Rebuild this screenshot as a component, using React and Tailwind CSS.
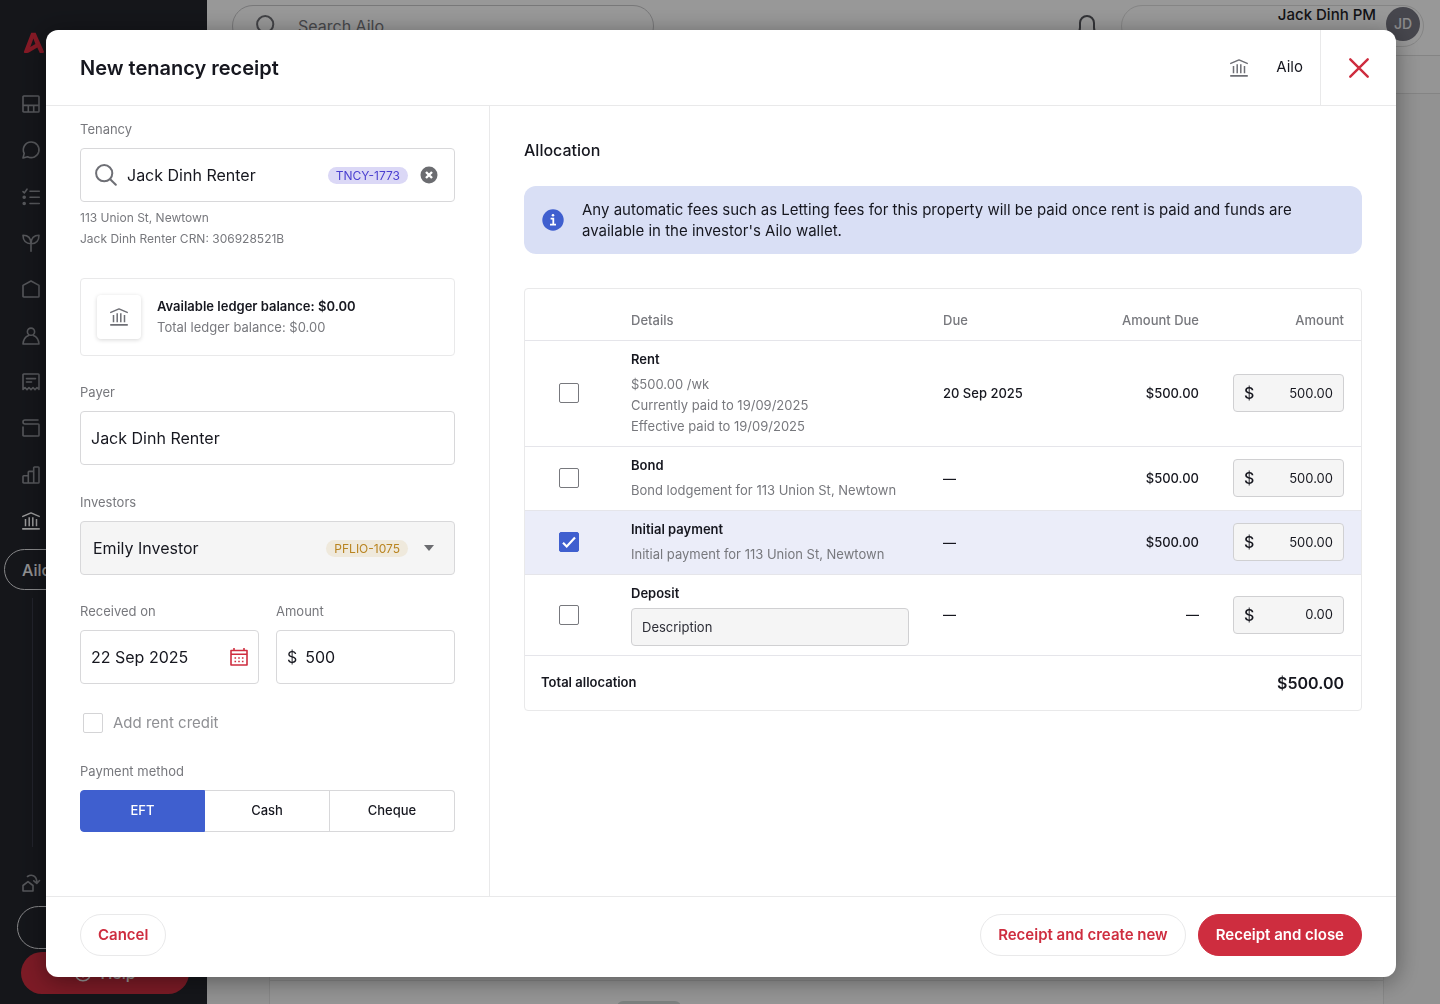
import React, { useState } from 'react';

const stroke = {
  fill: 'none',
  stroke: 'currentColor',
  strokeWidth: 1.6,
  strokeLinecap: 'round',
  strokeLinejoin: 'round',
};

const BankIcon = ({ className }) => (
  <svg viewBox="0 0 18 18" className={className} {...stroke} aria-hidden="true">
    <path d="M.8 4.400 9 .9l8.200 3.500" strokeWidth="1.500" />
    <path d="M3.500 7v7.200M7.200 5.200v9M10.800 5.200v9M14.500 7v7.200" strokeLinecap="butt" strokeWidth="1.500" />
    <path d="M.8 16.900h16.400" strokeWidth="1.700" />
  </svg>
);

const SearchIcon = ({ className }) => (
  <svg viewBox="0 0 22 22" className={className} {...stroke} strokeWidth="2" aria-hidden="true">
    <circle cx="9.2" cy="9.2" r="8.1" />
    <path d="m15.2 15.2 5.6 5.6" />
  </svg>
);

const navIcons = [
  {
    label: 'Dashboard',
    art: <path d="M1.8 1h14.4c.5 0 .8.3.8.8v14.4c0 .5-.3.8-.8.8H1.8c-.5 0-.8-.3-.8-.8V1.8c0-.5.3-.8.8-.8ZM1 10.4h16M6.3 10.4V17M11.7 10.4V17" />,
  },
  {
    label: 'Messages',
    art: <path d="M9.2 1a7.8 7.8 0 1 1-3.6 14.7L1 17l1.2-4.6A7.8 7.8 0 0 1 9.2 1Z" />,
  },
  {
    label: 'Tasks',
    art: (
      <>
        <path d="M8 3.3h9.3M8 9.3h9.3M8 15.5h9.3M1 3.6l1.4 1.3L5 1.2" />
        <circle cx="2.2" cy="9.3" r="1" fill="currentColor" />
        <circle cx="2.2" cy="15.5" r="1" fill="currentColor" />
      </>
    ),
  },
  {
    label: 'Leads',
    art: <path d="M9 17.3V9.7C4 9.7 1 6.7 1 1.3c5 0 8 2.7 8 8.4 0-5.7 3-8.4 8-8.4 0 5.4-3 8.4-8 8.4" />,
  },
  {
    label: 'Properties',
    art: <path d="M1 5.4 9 1l8 4.4v10.8c0 .5-.3.8-.8.8H1.8c-.5 0-.8-.3-.8-.8V5.4Z" />,
  },
  {
    label: 'Contacts',
    art: (
      <>
        <circle cx="9" cy="4.7" r="3.6" />
        <path d="M6.6 8.6C3.4 9.8 1.4 12.6 1 17h16c-.4-4.4-2.4-7.2-5.6-8.4" />
      </>
    ),
  },
  {
    label: 'Bills',
    art: <path d="M1 16.5V1.8c0-.5.3-.8.8-.8h14.4c.5 0 .8.3.8.8v14.7l-2-2-2 2.2-2-2.2-2 2.2-2-2.2-2 2.2-2-2.2-2 2ZM4.5 5.6h9M4.5 9h5" />,
  },
  {
    label: 'Wallet',
    art: <path d="M16 1H3a2 2 0 1 0 0 4h13.2c.5 0 .8.3.8.8v10.4c0 .5-.3.8-.8.8H1.8c-.5 0-.8-.3-.8-.8V8" />,
  },
  {
    label: 'Reports',
    art: <path d="M1 10.5c0-.5.3-.8.8-.8h4.5V17H1.8c-.5 0-.8-.3-.8-.8v-5.7ZM6.3 17V6.2c0-.5.3-.8.8-.8h4.6V17H6.3ZM11.7 17V1.8c0-.5.3-.8.8-.8h3.7c.5 0 .8.3.8.8v14.4c0 .5-.3.8-.8.8h-4.5Z" />,
  },
];

const Sidebar = () => (
  <nav className="flex w-[207px] shrink-0 flex-col bg-[#23252c] pt-8 pb-2.5 text-[#8e9096]">
    <svg viewBox="0 0 22 22" className="ml-[23px] h-[22px] w-[22px] text-[#df2b3f]" aria-hidden="true">
      <path
        d="M8.2.8h4.4l8.2 18.5c.5 1-.1 1.6-.9 1.6h-3.1l-2.5-5.4-8.4 4.9c-.6.3-1.1.5-1.700.5H1.800c-.8 0-1.100-.6-.8-1.400ZM10.400 6.400 7.300 15l5.100-2.900Z"
        fill="currentColor"
        fillRule="evenodd"
      />
    </svg>
    <div className="mt-[41px] ml-[22px] flex h-[435px] flex-col items-start justify-between">
      {navIcons.map(({ label, art }) => (
        <a key={label} href="#" aria-label={label}>
          <svg viewBox="0 0 18 18" className="h-[18px] w-[18px] overflow-visible" {...stroke}>
            {art}
          </svg>
        </a>
      ))}
      <a href="#" aria-label="Trust ledger" className="text-white">
        <BankIcon className="h-[18px] w-[18px]" />
      </a>
    </div>
    <a
      href="#"
      className="mt-[19px] mr-2 ml-1 flex h-[41px] items-center rounded-full border border-[#e0e0e3] pl-[17px] text-base font-medium text-[#f0f0f2]"
    >
      Ailo
    </a>
    <div className="mt-2 ml-8 w-px flex-1 bg-[#383a48]" />
    <a href="#" aria-label="Switch property" className="mt-[27px] ml-[22px]">
      <svg viewBox="0 0 18 18" className="h-[18px] w-[18px] overflow-visible" {...stroke}>
        <path d="M1 11.5 6 7.6l5 3.9V17H1v-5.5ZM5.5 2.500C9 .2 14.500.8 14.800 8M11.800 6.800l3 2.600 2.700-2.900" />
      </svg>
    </a>
    <div className="mt-3.5 mr-[17px] ml-[17px] h-[43px] rounded-full border border-[#e0e0e3]" />
    <button
      type="button"
      className="mt-[3px] mr-[18px] ml-[21px] flex h-[42px] items-center justify-center gap-2 rounded-full bg-[#ce2d3f] text-base font-medium text-white"
    >
      <svg viewBox="0 0 18 18" className="h-[18px] w-[18px]" {...stroke} aria-hidden="true">
        <circle cx="9" cy="9" r="7.8" />
        <path d="M7 7.2c0-2.5 4-2.5 4 0 0 1.5-2 1.6-2 3M9 12.8v.1" />
      </svg>
      Help
    </button>
  </nav>
);

const Backdrop = () => (
  <div className="flex h-screen w-full overflow-hidden" inert>
    <Sidebar />
    <div className="flex min-w-0 flex-1 flex-col bg-[#f3f3f3]">
      <header className="flex h-14 shrink-0 items-start justify-between border-b border-[#dcdcdc] bg-[#fdfdfd] pt-[5px] pr-4 pl-[25px]">
        <div className="flex h-[42px] w-[422px] items-center gap-5 rounded-full border border-[#c8c8ca] px-[23px] text-[#6e6f75]">
          <SearchIcon className="h-[22px] w-[22px]" />
          <input aria-label="Search" placeholder="Search Ailo..." className="min-w-0 flex-1 text-base placeholder:text-[#77787d]" />
        </div>
        <div className="flex items-start gap-[23px]">
          <svg viewBox="0 0 22 24" className="mt-2.5 h-6 w-[22px] text-[#55565c]" {...stroke} strokeWidth="2" aria-hidden="true">
            <path d="M1.5 18.5c2-1.5 2.5-3 2.5-6V8a7 7 0 0 1 14 0v4.5c0 3 .5 4.5 2.5 6h-19Z" />
          </svg>
          <div className="flex h-[42px] w-[303px] items-start justify-end gap-2.5 rounded-full border border-[#dedede] pt-px pr-[3px]">
            <div className="text-right">
              <p className="-mt-0.5 text-[15px]/5 font-medium text-[#1d1e27]">Jack Dinh PM</p>
              <p className="mt-1 flex justify-end gap-10 text-[15px]/4 text-[#6e6f75]">
                <span>Ailo Ltd</span>
                <span className="text-[#e0582f]">Runs on Ailo wallet</span>
              </p>
            </div>
            <div className="flex h-[34px] w-[34px] items-center justify-center rounded-full bg-[#757580] text-sm font-medium text-[#e8e8ea]">
              JD
            </div>
          </div>
        </div>
      </header>
      <div className="h-[38px] shrink-0 border-b border-[#dcdcdc] bg-[#f9f9f9]" />
      <div className="flex flex-1 pr-14 pl-[62px]">
        <div className="flex flex-1 flex-col justify-end border-x border-[#e2e2e2] bg-[#f9f9f9]">
          <div className="h-6 overflow-hidden border-t border-[#e2e2e2] pt-5">
            <div className="mx-auto flex w-[420px]">
              <span className="h-6 w-16 rounded-md bg-[#cfd6d4]" />
            </div>
          </div>
        </div>
      </div>
    </div>
  </div>
);

const Field = ({ id, label, className = '', children }) => (
  <div className={className}>
    <label htmlFor={id} className="block text-[13px]/5 text-[#77787d]">
      {label}
    </label>
    <div className="mt-[9px]">{children}</div>
  </div>
);

const Checkbox = ({ muted, ...props }) => (
  <span className="relative flex h-5 w-5 shrink-0">
    <input
      type="checkbox"
      className={`peer h-5 w-5 appearance-none rounded-xs border bg-white checked:border-[#3f5fcf] checked:bg-[#3f5fcf] ${
        muted ? 'border-[#d4d4d6]' : 'border-[#77787d]'
      }`}
      {...props}
    />
    <svg
      viewBox="0 0 20 20"
      className="pointer-events-none absolute inset-0 hidden h-5 w-5 text-white peer-checked:block"
      {...stroke}
      strokeWidth="2.2"
      strokeLinecap="butt"
      strokeLinejoin="miter"
    >
      <path d="m4 10.8 3.7 3.7L16 5.5" />
    </svg>
  </span>
);

const methods = ['EFT', 'Cash', 'Cheque'];

const ReceiptForm = () => {
  const [method, setMethod] = useState('EFT');

  return (
    <div className="w-[444px] shrink-0 overflow-y-auto border-r border-[#e9e9ea] pt-[13px] pr-[34px] pl-[34px]">
      <Field id="tenancy" label="Tenancy">
        <div className="flex h-[54px] items-center rounded-sm border border-[#d8d8da] pr-4 pl-3.5">
          <SearchIcon className="h-[22px] w-[22px] shrink-0 text-[#6e6f75]" />
          <input id="tenancy" defaultValue="Jack Dinh Renter" className="ml-2.5 min-w-0 flex-1 text-base outline-none" />
          <span className="rounded-full bg-[#dbd8f6] px-2 text-xs/[17px] text-[#4a3fd0]">TNCY-1773</span>
          <button type="button" aria-label="Clear tenancy" className="ml-3">
            <svg viewBox="0 0 18 18" className="h-[18px] w-[18px]">
              <circle cx="9" cy="9" r="8.5" fill="#6b6c70" />
              <path d="m6 6 6 6m0-6-6 6" stroke="#fff" strokeWidth="2.4" />
            </svg>
          </button>
        </div>
      </Field>
      <p className="mt-[5px] text-xs/[21px] text-[#77787d]">
        113 Union St, Newtown
        <br />
        Jack Dinh Renter CRN: 306928521B
      </p>

      <div className="mt-[29px] flex h-[78px] items-center gap-4 rounded-sm border border-[#e9e9ea] px-4">
        <div className="flex h-11 w-11 items-center justify-center rounded-sm bg-white text-[#6e6f75] shadow-[0_1px_4px_rgba(0,0,0,0.16)]">
          <BankIcon className="h-[18px] w-[18px]" />
        </div>
        <div className="text-[13px]/[21px]">
          <p className="font-semibold">Available ledger balance: $0.00</p>
          <p className="text-[#77787d]">Total ledger balance: $0.00</p>
        </div>
      </div>

      <Field id="payer" label="Payer" className="mt-[26px]">
        <input
          id="payer"
          defaultValue="Jack Dinh Renter"
          className="block h-[54px] w-full rounded-sm border border-[#d8d8da] px-2.5 text-base"
        />
      </Field>

      <Field id="investors" label="Investors" className="mt-[27px]">
        <div className="flex h-[54px] items-center rounded-sm border border-[#d8d8da] bg-[#f5f5f5] pr-5 pl-3">
          <select id="investors" className="min-w-0 flex-1 appearance-none text-base">
            <option>Emily Investor</option>
          </select>
          <span className="rounded-full bg-[#efe9dc] px-2 text-xs/[17px] text-[#b98420]">PFLIO-1075</span>
          <svg viewBox="0 0 10 6" className="ml-4 h-1.5 w-2.5 text-[#6b6c70]" aria-hidden="true">
            <path d="M0 0h10L5 6Z" fill="currentColor" />
          </svg>
        </div>
      </Field>

      <div className="mt-[26px] grid grid-cols-2 gap-[17px]">
        <Field id="received" label="Received on">
          <div className="flex h-[54px] items-center rounded-sm border border-[#d8d8da] px-2.5">
            <input id="received" defaultValue="22 Sep 2025" className="min-w-0 flex-1 text-base" />
            <button type="button" aria-label="Open calendar">
              <svg viewBox="0 0 18 18" className="h-[18px] w-[18px] text-[#ce2d3f]" {...stroke}>
                <path d="M1 2.5h16V17H1ZM1 6.2h16M4 .5v2M14 .5v2" />
                <path d="M4.5 10h9M4.5 13.5h9" strokeWidth="1.6" strokeDasharray="1.6 2.1" strokeLinecap="butt" />
              </svg>
            </button>
          </div>
        </Field>
        <Field id="amount" label="Amount">
          <div className="flex h-[54px] items-center gap-2 rounded-sm border border-[#d8d8da] px-2.5 text-base">
            <span>$</span>
            <input id="amount" defaultValue="500" className="min-w-0 flex-1" />
          </div>
        </Field>
      </div>

      <label className="mt-[27px] flex h-6 items-center gap-2.5 pl-[3px] text-[15px] text-[#8f9094]">
        <Checkbox muted disabled />
        Add rent credit
      </label>

      <p id="method-label" className="mt-[26px] text-[13px]/5 text-[#77787d]">
        Payment method
      </p>
      <div role="group" aria-labelledby="method-label" className="mt-[9px] grid h-[42px] grid-cols-3">
        {methods.map((name) => (
          <button
            key={name}
            type="button"
            aria-pressed={method === name}
            onClick={() => setMethod(name)}
            className={`border-y border-r text-[13px] font-medium first:rounded-l-sm first:border-l last:rounded-r-sm ${
              method === name ? 'border-[#3f5fcf] bg-[#3f5fcf] text-white' : 'border-[#d8d8da] bg-white'
            }`}
          >
            {name}
          </button>
        ))}
      </div>
    </div>
  );
};

const rows = [
  {
    name: 'Rent',
    height: 'h-[106px]',
    details: ['$500.00 /wk', 'Currently paid to 19/09/2025', 'Effective paid to 19/09/2025'],
    due: '20 Sep 2025',
    amountDue: '$500.00',
    amount: '500.00',
  },
  {
    name: 'Bond',
    height: 'h-16',
    details: ['Bond lodgement for 113 Union St, Newtown'],
    due: '—',
    amountDue: '$500.00',
    amount: '500.00',
  },
  {
    name: 'Initial payment',
    height: 'h-16',
    details: ['Initial payment for 113 Union St, Newtown'],
    due: '—',
    amountDue: '$500.00',
    amount: '500.00',
    selected: true,
  },
  {
    name: 'Deposit',
    height: 'h-[81px]',
    details: [],
    due: '—',
    amountDue: '—',
    amount: '0.00',
  },
];

const AllocationRow = ({ row }) => {
  const [checked, setChecked] = useState(Boolean(row.selected));

  return (
    <tr className={`border-b border-[#e5e5ea] ${row.height} ${checked ? 'bg-[#ebedf9]' : ''}`}>
      <td className="pl-[34px]">
        <Checkbox aria-label={row.name} checked={checked} onChange={(e) => setChecked(e.target.checked)} />
      </td>
      <td className="px-[17px] text-[#77787d]">
        <p className="font-semibold text-[#16171f]">{row.name}</p>
        {row.details.length > 0 ? (
          <div className="mt-1">
            {row.details.map((line) => (
              <p key={line} className="whitespace-nowrap">{line}</p>
            ))}
          </div>
        ) : (
          <input
            aria-label="Deposit description"
            placeholder="Description"
            className="mt-1 block h-[38px] w-full rounded-sm border border-[#d0d0d2] bg-[#f5f5f5] px-2.5 placeholder:text-[#2b2c35]"
          />
        )}
      </td>
      <td className="px-[17px] font-medium">{row.due}</td>
      <td className="px-[17px] text-right font-medium">{row.amountDue}</td>
      <td className="px-[17px]">
        <div className="flex h-[38px] items-center rounded-sm border border-[#d0d0d2] bg-[#f5f5f5] px-2.5">
          <span className="text-base font-medium">$</span>
          <input aria-label={`${row.name} amount`} defaultValue={row.amount} className="min-w-0 flex-1 text-right" />
        </div>
      </td>
    </tr>
  );
};

const Allocation = () => (
  <div className="min-w-0 flex-1 overflow-y-auto px-[34px] pt-[34px]">
    <h2 className="text-base/5 font-medium">Allocation</h2>
    <div className="mt-[26px] flex h-[68px] items-center gap-[18px] rounded-xl bg-[#d9dff5] px-[18px]">
      <svg viewBox="0 0 22 22" className="h-[22px] w-[22px] shrink-0" aria-hidden="true">
        <circle cx="11" cy="11" r="10.7" fill="#3f5fcf" />
        <circle cx="11" cy="6.3" r="1.3" fill="#fff" />
        <path d="M8.6 9.7h2.7v5.6M8 15.6h6" fill="none" stroke="#fff" strokeWidth="1.8" />
      </svg>
      <p className="max-w-[730px] text-[15px]/[21px]">
        Any automatic fees such as Letting fees for this property will be paid once rent is paid and funds are available in
        the investor's Ailo wallet.
      </p>
    </div>

    <div className="mt-[34px] overflow-hidden rounded-sm border border-[#e9e9ea]">
      <table className="w-full table-fixed text-[13px]/[21px]">
        <colgroup>
          <col className="w-[89px]" />
          <col />
          <col className="w-[145px]" />
          <col className="w-[145px]" />
          <col className="w-[145px]" />
        </colgroup>
        <thead>
          <tr className="h-[51px] border-b border-[#e5e5ea] text-left text-[#77787d]">
            <td />
            <th className="px-[17px] pt-3 font-medium">Details</th>
            <th className="px-[17px] pt-3 font-medium">Due</th>
            <th className="px-[17px] pt-3 text-right font-medium">Amount Due</th>
            <th className="px-[17px] pt-3 text-right font-medium">Amount</th>
          </tr>
        </thead>
        <tbody>
          {rows.map((row) => (
            <AllocationRow key={row.name} row={row} />
          ))}
        </tbody>
        <tfoot>
          <tr className="h-[55px]">
            <th colSpan={3} className="px-4 text-left font-semibold">Total allocation</th>
            <td colSpan={2} className="px-[17px] text-right text-base font-semibold">$500.00</td>
          </tr>
        </tfoot>
      </table>
    </div>
  </div>
);

const ReceiptDialog = () => (
  <div
    role="dialog"
    aria-modal="true"
    aria-labelledby="dialog-title"
    className="flex min-h-0 flex-1 flex-col overflow-hidden rounded-xl bg-white text-[#16171f] shadow-[0_4px_24px_rgba(0,0,0,0.4)]"
  >
    <header className="flex h-[76px] shrink-0 items-stretch border-b border-[#e9e9ea] pl-[34px]">
      <h1 id="dialog-title" className="flex flex-1 items-center text-xl font-semibold">
        New tenancy receipt
      </h1>
      <div className="flex items-center gap-7 border-r border-[#e9e9ea] pr-[17px]">
        <BankIcon className="h-[18px] w-[18px] text-[#6e6f75]" />
        <span className="text-[15px]">Ailo</span>
      </div>
      <button type="button" aria-label="Close" className="flex w-[75px] items-center justify-center text-[#ce2d3f]">
        <svg viewBox="0 0 20 20" className="h-5 w-5" {...stroke} strokeWidth="2.4">
          <path d="m1.3 1.3 17.4 17.4m0-17.4L1.3 18.7" />
        </svg>
      </button>
    </header>

    <div className="flex min-h-0 flex-1">
      <ReceiptForm />
      <Allocation />
    </div>

    <footer className="flex h-[81px] shrink-0 items-center gap-3 border-t border-[#e9e9ea] px-[34px] pb-1 text-[15px] font-semibold">
      <button type="button" className="mr-auto h-[42px] rounded-full border border-[#e9e9ea] px-[17px] text-[#ce2d3f]">
        Cancel
      </button>
      <button type="button" className="h-[42px] rounded-full border border-[#e9e9ea] px-[17px] text-[#ce2d3f]">
        Receipt and create new
      </button>
      <button type="button" className="h-[42px] rounded-full border border-[#ce2d3f] bg-[#ce2d3f] px-[17px] text-white">
        Receipt and close
      </button>
    </footer>
  </div>
);

const App = () => (
  <div className="font-['Inter',sans-serif]">
    <Backdrop />
    <div className="fixed inset-0 flex flex-col bg-black/40 pt-[30px] pr-11 pb-[27px] pl-[46px]">
      <ReceiptDialog />
    </div>
  </div>
);

export default App;
